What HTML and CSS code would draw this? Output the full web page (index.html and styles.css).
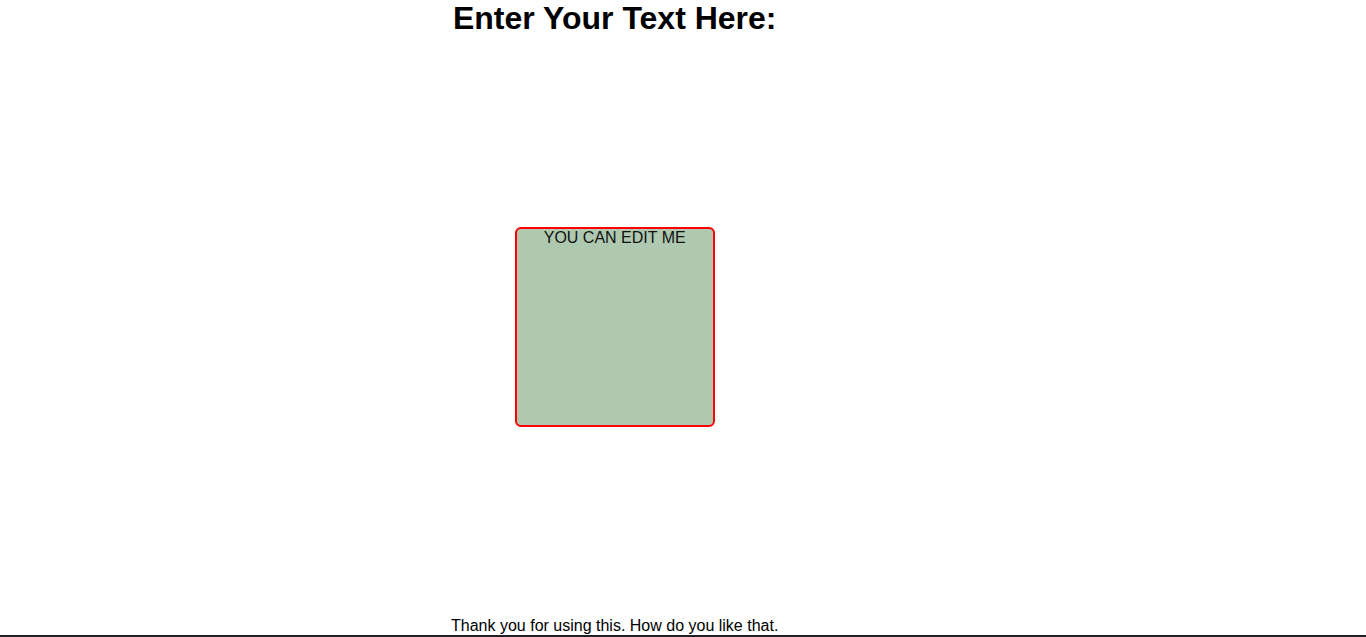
FILE: index.html
```html
<!DOCTYPE html>
<html>
<head>
<meta charset="utf-8">
<link rel="stylesheet" href="styles.css">
</head>
<body>
<div class="page">
  <h1 class="title">Enter Your Text Here:</h1>
  <div class="editor" contenteditable="true">YOU CAN EDIT ME</div>
  <p class="thanks">Thank you for using this. How do you like that.</p>
</div>
<div class="bottom-bar"></div>
</body>
</html>
```
FILE: styles.css
```css
html, body {
  margin: 0;
  padding: 0;
  background: #ffffff;
}
body {
  font-family: "Liberation Sans", Arial, sans-serif;
  font-size: 16px;
  color: #000;
}
.page {
  width: 90%;
  text-align: center;
}
.title {
  margin: 0;
  font-size: 32px;
  line-height: 37px;
  font-weight: bold;
}
.editor {
  box-sizing: border-box;
  width: 200px;
  height: 200px;
  margin: 190px auto 0;
  border: 2px solid #ff0000;
  border-radius: 6px;
  background: #afc9b0;
  color: #111;
  line-height: 18px;
  padding-top: 0;
  outline: none;
}
.thanks {
  margin: 190px 0 0;
  line-height: 18px;
}
.bottom-bar {
  height: 40px;
  background: #1f2024;
}
```
